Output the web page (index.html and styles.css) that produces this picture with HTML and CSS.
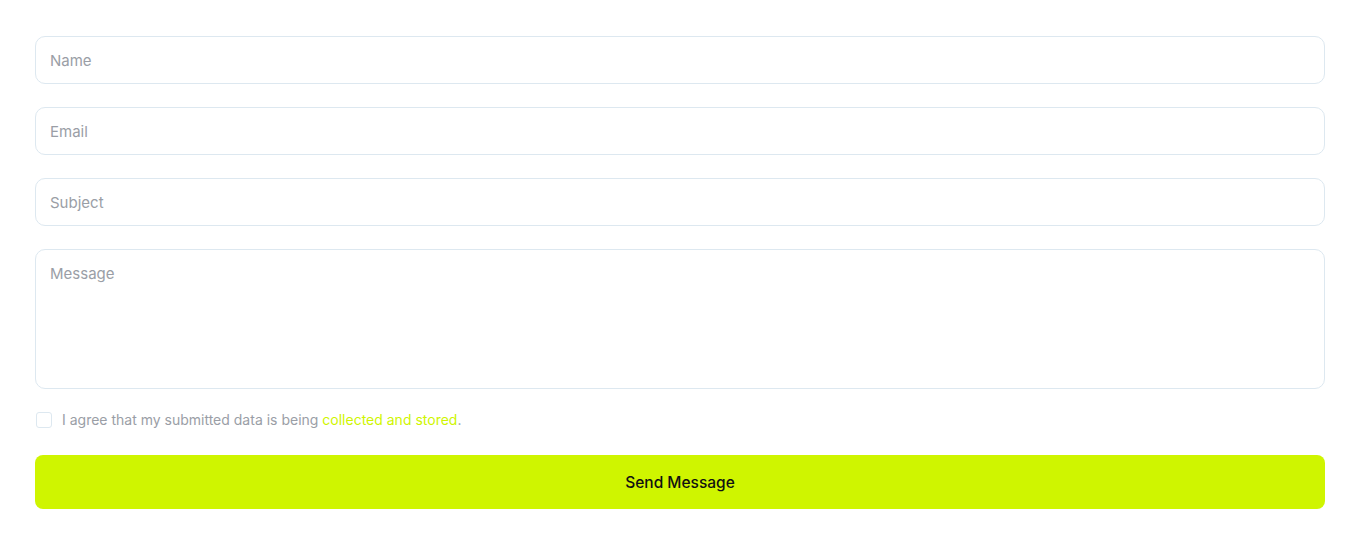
FILE: index.html
```html
<!DOCTYPE html>
<html lang="en">
  <head>
    <meta charset="UTF-8" />
    <meta name="viewport" content="width=device-width, initial-scale=1.0" />
    <title>Contact</title>
    <link rel="stylesheet" href="styles.css">
  </head>
  <body>
    <!-- Contact form -->
    <form class="contact-form">
      <input class="field" type="text" placeholder="Name" />
      <input class="field" type="email" placeholder="Email" />
      <input class="field" type="text" placeholder="Subject" />
      <textarea class="field message" placeholder="Message"></textarea>

      <label class="agree">
        <input type="checkbox" />
        <span>I agree that my submitted data is being <a href="#">collected and stored</a>.</span>
      </label>

      <button type="button" class="send">Send Message</button>
    </form>
  </body>
</html>
```

FILE: styles.css
```css
body {
  font-family: "Inter", "Liberation Sans", sans-serif;
  background-color: #ffffff;
  color: #333;
  margin: 0;
  padding: 36px 35px;
}

/* Form layout */
.contact-form {
  display: flex;
  flex-direction: column;
  gap: 23px;
}

/* Inputs and textarea */
.field {
  box-sizing: border-box;
  width: 100%;
  height: 48px;
  padding: 0 14px;
  font-family: inherit;
  font-size: 15px;
  color: #333;
  background: #fff;
  border: 1px solid #dde8f0;
  border-radius: 10px;
  outline: none;
}

.field::placeholder {
  color: #9a9ea6;
}

.message {
  height: 140px;
  padding: 14px;
  resize: none;
}

/* Agreement checkbox */
.agree {
  display: flex;
  align-items: center;
  gap: 10px;
  margin-top: -1px;
  font-size: 14px;
  color: #9a9ea6;
}

.agree input {
  appearance: none;
  width: 16px;
  height: 16px;
  margin: 0 0 0 1px;
  border: 1.5px solid #dde8f0;
  border-radius: 3px;
}

.agree a {
  color: #cff500;
  text-decoration: none;
}

/* Submit button */
.send {
  height: 54px;
  margin-top: 4px;
  font-family: "Inter", "Liberation Sans", sans-serif;
  font-size: 15.5px;
  font-weight: 500;
  color: #111;
  background-color: #cff500;
  border: none;
  border-radius: 8px;
  cursor: pointer;
}
```
